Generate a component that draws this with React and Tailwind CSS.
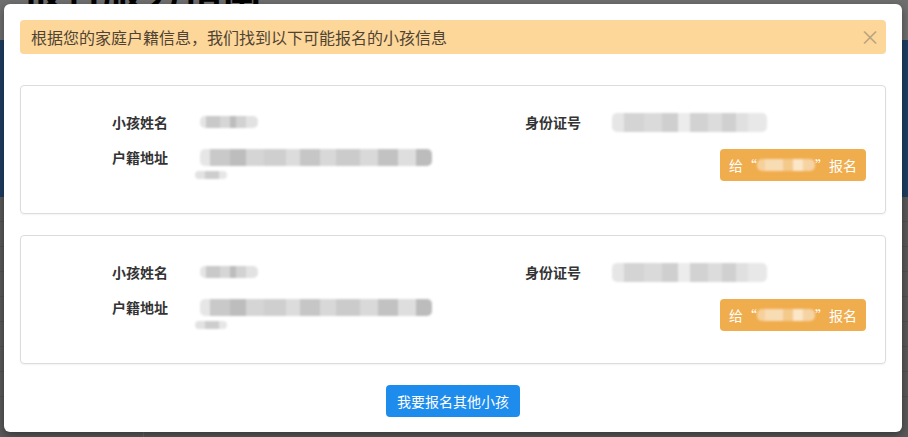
import React from "react";

const cjk = "font-['Microsoft_YaHei','Noto_Sans_CJK_SC','Noto_Sans',sans-serif]";

// redacted values in the screenshot are blurred blocks of grey
const nameBlocks = [
  [6, "#e4e4e4"],
  [14, "#c9c9c9"],
  [10, "#d6d6d6"],
  [6, "#bdbdbd"],
  [10, "#d2d2d2"],
  [12, "#e2e2e2"],
];
const idBlocks = [
  [12, "#e6e6e6"],
  [20, "#d4d4d4"],
  [18, "#dadada"],
  [16, "#cfcfcf"],
  [12, "#ececec"],
  [18, "#d2d2d2"],
  [14, "#dcdcdc"],
  [14, "#d0d0d0"],
  [12, "#e0e0e0"],
  [19, "#e8e8e8"],
];
const addrBlocks = [
  [10, "#e6e6e6"],
  [20, "#c9c9c9"],
  [16, "#bdbdbd"],
  [18, "#d5d5d5"],
  [22, "#cfcfcf"],
  [14, "#dcdcdc"],
  [20, "#c6c6c6"],
  [16, "#d8d8d8"],
  [24, "#cbcbcb"],
  [18, "#d9d9d9"],
  [20, "#c2c2c2"],
  [18, "#dedede"],
  [16, "#bcbcbc"],
];
const addrTail = [
  [10, "#e2e2e2"],
  [14, "#cdcdcd"],
  [8, "#e6e6e6"],
];
const btnBlocks = [
  [8, "#f6d09a"],
  [18, "#f8dcb4"],
  [10, "#f4c98c"],
  [10, "#fbe6c8"],
  [12, "#f6d3a2"],
];

function Smudge({ blocks, className = "" }) {
  return (
    <span className={`inline-flex overflow-hidden rounded-[5px] blur-[1.2px] ${className}`}>
      {blocks.map(([w, c], i) => (
        <span key={i} className="h-full shrink-0" style={{ width: w, background: c }} />
      ))}
    </span>
  );
}

function ChildCard() {
  return (
    <div className="flex h-[129px] rounded-[4px] border border-[#dcdcdc] shadow-[0_1px_2px_rgba(0,0,0,0.05)]">
      <div className="w-[433px] pl-[91px] pt-[26px]">
        <div className="flex h-5 items-center">
          <span className="w-[88px] text-[14px] font-bold text-[#333]">小孩姓名</span>
          <Smudge blocks={nameBlocks} className="h-[12px]" />
        </div>
        <div className="mt-[15px] flex">
          <span className="flex h-5 w-[88px] items-center text-[14px] font-bold text-[#333]">户籍地址</span>
          <div className="flex flex-col pt-[2px]">
            <Smudge blocks={addrBlocks} className="h-[17px] w-[232px]" />
            <Smudge blocks={addrTail} className="-ml-[5px] mt-[5px] h-[8px] w-[32px]" />
          </div>
        </div>
      </div>
      <div className="flex flex-1 flex-col pl-[71px] pt-[26px]">
        <div className="flex h-5 items-center">
          <span className="w-[87px] text-[14px] font-bold text-[#333]">身份证号</span>
          <Smudge blocks={idBlocks} className="h-[19px] w-[155px]" />
        </div>
        <button className="mr-[19px] mt-[17px] flex h-8 items-center self-end rounded-[4px] bg-[#f0ad4e] px-[9px] text-[14px] text-white">
          <span>给“</span>
          <Smudge blocks={btnBlocks} className="h-[12px] w-[58px]" />
          <span>”报名</span>
        </button>
      </div>
    </div>
  );
}

function BackgroundPage() {
  return (
    <div className="flex h-[437px] w-[908px] flex-col overflow-hidden bg-white">
      <div className="h-[43px] bg-[#dedede] pl-[22px]">
        <div className="-mt-[31px] text-[40px] font-bold leading-[40px] text-black">报名服务指南</div>
      </div>
      <div className="h-[169px] bg-[#3d7cc6]" />
      <div className="flex flex-1 flex-col bg-[#b4b4b4]">
        {[0, 1, 2, 3, 4, 5, 6, 7].map((i) => (
          <div key={i} className="h-[25px] border-b border-[#a2a2a2]" />
        ))}
        <div className="flex h-[40px]">
          <div className="w-[144px] border-r border-[#d0d0d0] pl-[65px] pt-[8px] text-[15px] text-black">户籍地址</div>
        </div>
      </div>
    </div>
  );
}

export default function App() {
  return (
    <div className={`relative h-[437px] w-[908px] overflow-hidden ${cjk}`}>
      <BackgroundPage />
      <div className="absolute inset-0 bg-black/50" />
      <div className="absolute left-[4px] top-[4px] flex h-[428px] w-[898px] flex-col rounded-[6px] bg-white px-4 pb-[15px] pt-4 shadow-[0_3px_9px_rgba(0,0,0,0.4)]">
        <div className="flex h-[35px] items-center justify-between rounded-[4px] bg-[#fdd699] pl-[11px] pr-[6px]">
          <span className="text-[16px] text-[#4f4434]">根据您的家庭户籍信息，我们找到以下可能报名的小孩信息</span>
          <span className="text-[20px] leading-none text-[#b9a27c]">×</span>
        </div>
        <div className="mt-[31px]">
          <ChildCard />
        </div>
        <div className="mt-[21px]">
          <ChildCard />
        </div>
        <button className="mt-[21px] flex h-8 items-center self-center rounded-[4px] bg-[#1e8cec] px-[11px] text-[14px] text-white">
          我要报名其他小孩
        </button>
      </div>
    </div>
  );
}
